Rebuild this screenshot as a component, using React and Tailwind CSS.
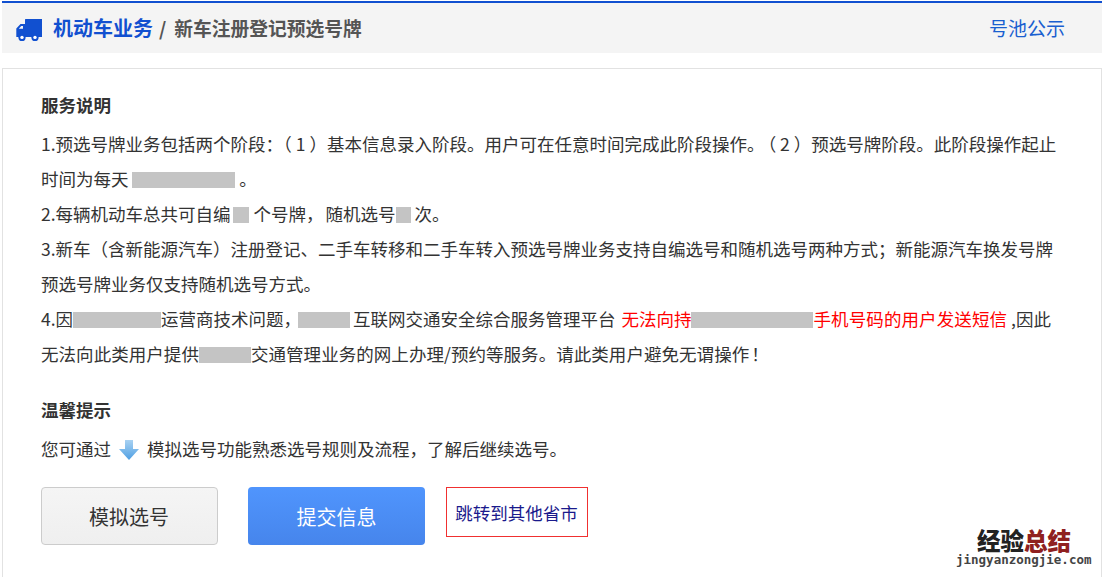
const font = "font-['Noto_Sans_CJK_SC','Liberation_Sans',sans-serif]"

function Blur({ w, className = '' }) {
  return <span className={`inline-block h-[16px] align-[-2px] bg-[#c4c4c4] ${w} ${className}`} />
}

function Truck() {
  return (
    <svg viewBox="0 0 26 22" className="mt-1 w-[26px] h-[22px] text-[#1150d0]" fill="currentColor">
      <path d="M9 .5a.5.5 0 0 1 .5-.5H26v18H9z" />
      <path fillRule="evenodd" d="M9 5H4.5L.3 9.5V18H9zM7 9.8H2.8L5.2 7H7z" />
      <circle cx="6" cy="18.4" r="3.6" />
      <circle cx="19" cy="18.4" r="3.6" />
      <circle cx="6" cy="18.4" r="1.7" fill="#fff" />
      <circle cx="19" cy="18.4" r="1.7" fill="#fff" />
    </svg>
  )
}

function DownArrow() {
  return (
    <svg viewBox="0 0 20 20" className="inline-block w-[20px] h-[20px] align-[-4px] mx-[8px]">
      <defs>
        <linearGradient id="arrow" x1="0" y1="0" x2="0" y2="1">
          <stop offset="0" stopColor="#a9d2f2" />
          <stop offset="1" stopColor="#4f9fe3" />
        </linearGradient>
      </defs>
      <path d="M6 0h8v9h6L10 20 0 9h6z" fill="url(#arrow)" />
    </svg>
  )
}

export default function App() {
  return (
    <div className={`${font} w-[1106px] h-[577px] overflow-hidden bg-white pt-px pl-[2px] pr-[4px] text-[#333]`}>
      {/* Header */}
      <div className="h-[52px] border-t-[2px] border-[#1150d0] bg-[#f4f4f4] flex items-center justify-between pl-[14px] pr-[37px]">
        <div className="flex items-center">
          <Truck />
          <span className="ml-[11px] text-[20px] font-bold text-[#1150d0]">机动车业务</span>
          <span className="ml-[6px] text-[18.75px] font-bold text-[#555]">/<span className="ml-[8px]">新车注册登记预选号牌</span></span>
        </div>
        <a className="text-[19px] text-[#1a5fd0]">号池公示</a>
      </div>

      {/* Panel */}
      <div className="relative mt-[15px] h-[520px] border border-[#e2e2e2] pl-[38px] pt-[18px] text-[17.5px] leading-[35px] whitespace-nowrap">
        <h3 className="mb-[4px] text-[17.5px] font-bold">服务说明</h3>
        <p>1.预选号牌业务包括两个阶段：（ 1 ）基本信息录入阶段。用户可在任意时间完成此阶段操作。<span className="ml-[3px]">（ 2 ）预选号牌阶段。此阶段操作起止</span></p>
        <p>时间为每天 <Blur w="w-[103px]" /> 。</p>
        <p>2.每辆机动车总共可自编<Blur w="w-[16px]" className="ml-[2px]" /><span className="ml-[1px]"> 个号牌，</span><span className="ml-[2px]">随机选号</span><Blur w="w-[15px]" /> 次。</p>
        <p>3.新车（含新能源汽车）注册登记、二手车转移和二手车转入预选号牌业务支持自编选号和随机选号两种方式；新能源汽车换发号牌</p>
        <p>预选号牌业务仅支持随机选号方式。</p>
        <p>
          4.因<Blur w="w-[88px]" />运营商技术问题，<Blur w="w-[52px]" className="-ml-[3px] mr-[3px]" />互联网交通安全综合服务管理平台{' '}
          <span className="ml-[2px] text-[#ff0000]">无法向持<Blur w="w-[122px]" className="-ml-[1px]" /><span className="ml-[1px] tracking-[0.1px]">手机号码的用户发送短信</span></span> ,因此
        </p>
        <p className="tracking-[0.05px]">无法向此类用户提供<Blur w="w-[52px]" />交通管理业务的网上办理/预约等服务。请此类用户避免无谓操作<span className="ml-[2px]">！</span></p>

        <h3 className="mt-[21px] mb-[4px] text-[17.5px] font-bold">温馨提示</h3>
        <p>您可通过<DownArrow />模拟选号功能熟悉选号规则及流程，了解后继续选号。</p>

        <div className="mt-[21px] flex items-start">
          <button className="w-[177px] h-[58px] rounded-[4px] border border-[#ccc] bg-gradient-to-b from-[#f5f5f5] to-[#efefef] pr-[1px] text-[20px] text-[#333]">模拟选号</button>
          <button className="ml-[30px] w-[177px] h-[58px] rounded-[4px] bg-gradient-to-b from-[#5095fd] to-[#4685ec] text-[20px] text-white">提交信息</button>
          <a className="ml-[21px] w-[142px] h-[50px] border border-[#f03030] flex items-center justify-center pr-[1px] text-[17.5px] text-[#1a1a8c]">跳转到其他省市</a>
        </div>

        {/* Watermark */}
        <div className="absolute left-[953px] top-[459px] w-[145px]">
          <div className="pl-[21px] text-[23.5px] font-black leading-[24px] text-[#222]">经验<span className="text-[#8f2020]">总结</span></div>
          <div className="mt-[1px] text-[12.5px] font-bold leading-[14px] text-[#444] font-['DejaVu_Sans_Mono',monospace]">jingyanzongjie.com</div>
        </div>
      </div>
    </div>
  )
}
